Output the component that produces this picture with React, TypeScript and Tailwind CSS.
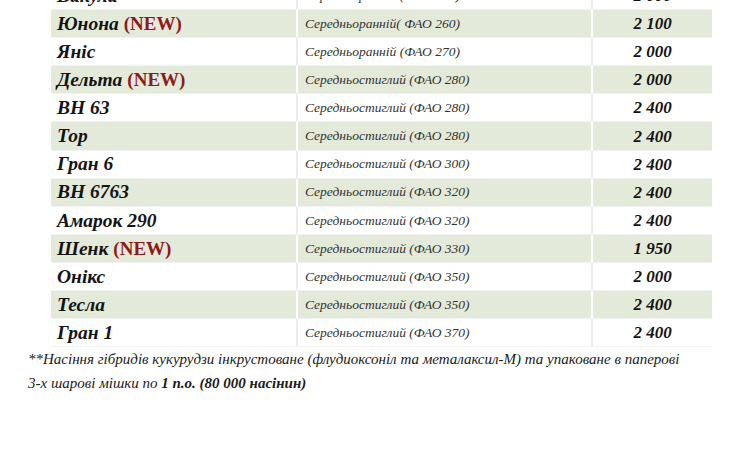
import React from "react";

type Row = { name: string; isNew?: boolean; type: string; price: string };

const rows: Row[] = [
  { name: "Вакула", type: "Середньоранній (ФАО 250)", price: "2 000" },
  { name: "Юнона", isNew: true, type: "Середньоранній( ФАО 260)", price: "2 100" },
  { name: "Яніс", type: "Середньоранній (ФАО 270)", price: "2 000" },
  { name: "Дельта", isNew: true, type: "Середньостиглий (ФАО 280)", price: "2 000" },
  { name: "ВН 63", type: "Середньостиглий (ФАО 280)", price: "2 400" },
  { name: "Тор", type: "Середньостиглий (ФАО 280)", price: "2 400" },
  { name: "Гран 6", type: "Середньостиглий (ФАО 300)", price: "2 400" },
  { name: "ВН 6763", type: "Середньостиглий (ФАО 320)", price: "2 400" },
  { name: "Амарок 290", type: "Середньостиглий (ФАО 320)", price: "2 400" },
  { name: "Шенк", isNew: true, type: "Середньостиглий (ФАО 330)", price: "1 950" },
  { name: "Онікс", type: "Середньостиглий (ФАО 350)", price: "2 000" },
  { name: "Тесла", type: "Середньостиглий (ФАО 350)", price: "2 400" },
  { name: "Гран 1", type: "Середньостиглий (ФАО 370)", price: "2 400" },
];

export default function App() {
  return (
    <div className="w-[750px] h-[450px] overflow-hidden bg-white font-['Liberation_Serif',serif] text-[#141414]">
      {/* price table, first row is cut by the top edge */}
      <div className="-mt-[18px] ml-[51px] w-[661px] flex flex-col">
        {rows.map((r, i) => {
          const green = i % 2 === 1;
          return (
            <div
              key={r.name}
              className={`grid grid-cols-[247px_295px_119px] h-[28.1px] ${green ? "bg-[#e3ead9]" : "bg-white"} border-b border-[#f3f3f3]`}
            >
              <div className={`flex items-center pl-[6px] border-r-2 ${green ? "border-white" : "border-[#ececec]"}`}>
                <span className="text-[19.5px] font-bold italic leading-none">{r.name}</span>
                {r.isNew && (
                  <span className="ml-[5px] text-[19px] font-bold not-italic leading-none text-[#8e1b1b]">(NEW)</span>
                )}
              </div>
              <div className={`flex items-center pl-[7px] border-r-2 ${green ? "border-white" : "border-[#ececec]"}`}>
                <span className="text-[13.5px] italic leading-none text-[#333]">{r.type}</span>
              </div>
              <div className="flex items-center justify-center">
                <span className="text-[17px] font-bold italic leading-none">{r.price}</span>
              </div>
            </div>
          );
        })}
      </div>
      {/* footnote */}
      <div className="ml-[28px] mt-0 text-[15px] italic leading-[24px] text-[#1a1a1a]">
        <p>**Насіння гібридів кукурудзи інкрустоване (флудиоксоніл та металаксил-М) та упаковане в паперові</p>
        <p>
          3-х шарові мішки по <span className="font-bold">1 п.о. (80 000 насінин)</span>
        </p>
      </div>
    </div>
  );
}
